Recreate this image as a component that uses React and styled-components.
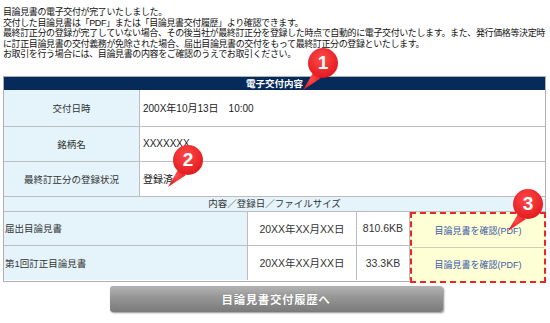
import React from 'react';
import styled, { createGlobalStyle } from 'styled-components';

const GlobalStyle = createGlobalStyle`
  html, body {
    margin: 0;
    padding: 0;
    background: #ffffff;
  }
  body {
    font-family: "Liberation Sans", "Noto Sans CJK JP", sans-serif;
    color: #222;
  }
`;

const introLines = [
  '目論見書の電子交付が完了いたしました。',
  '交付した目論見書は「PDF」または「目論見書交付履歴」より確認できます。',
  '最終訂正分の登録が完了していない場合、その後当社が最終訂正分を登録した時点で自動的に電子交付いたします。また、発行価格等決定時',
  'に訂正目論見書の交付義務が免除された場合、届出目論見書の交付をもって最終訂正分の登録といたします。',
  'お取引を行う場合には、目論見書の内容をご確認のうえでお取引ください。',
];

const infoRows = [
  { label: '交付日時', value: '200X年10月13日　10:00' },
  { label: '銘柄名', value: 'XXXXXXX' },
  { label: '最終訂正分の登録状況', value: '登録済' },
];

const docs = [
  { name: '届出目論見書', date: '20XX年XX月XX日', size: '810.6KB' },
  { name: '第1回訂正目論見書', date: '20XX年XX月XX日', size: '33.3KB' },
];

const Badge = ({ num, x, y }) => (
  <BadgeWrap style={{ left: x, top: y }}>
    <svg width="44" height="44" viewBox="0 0 44 44">
      <defs>
        <radialGradient id={`bg${num}`} cx="45%" cy="35%" r="70%">
          <stop offset="0%" stopColor="#ff4a4a" />
          <stop offset="100%" stopColor="#e0161c" />
        </radialGradient>
      </defs>
      <path d="M16 25 L6 42 L24 30 Z" fill={`url(#bg${num})`} />
      <circle cx="26" cy="15" r="15" fill={`url(#bg${num})`} />
    </svg>
    <BadgeNum>{num}</BadgeNum>
  </BadgeWrap>
);

export default function App() {
  return (
    <Page>
      <GlobalStyle />
      <Intro>
        {introLines.map((l) => (
          <IntroLine key={l}>{l}</IntroLine>
        ))}
      </Intro>

      <Panel>
        <PanelHead>電子交付内容</PanelHead>
        {infoRows.map((r) => (
          <InfoRow key={r.label}>
            <LabelCell>{r.label}</LabelCell>
            <ValueCell>{r.value}</ValueCell>
          </InfoRow>
        ))}
        <SubHead>内容／登録日／ファイルサイズ</SubHead>
        <DocArea>
          <DocGrid>
            {docs.map((d, i) => (
              <React.Fragment key={d.name}>
                <DocName $last={i === docs.length - 1}>{d.name}</DocName>
                <DocCell $last={i === docs.length - 1}>{d.date}</DocCell>
                <DocCell $last={i === docs.length - 1}>{d.size}</DocCell>
              </React.Fragment>
            ))}
          </DocGrid>
          <LinkColumn>
            {docs.map((d, i) => (
              <LinkCell key={d.name} $last={i === docs.length - 1}>
                目論見書を確認(PDF)
              </LinkCell>
            ))}
          </LinkColumn>
        </DocArea>
      </Panel>

      <ButtonRow>
        <HistoryButton>目論見書交付履歴へ</HistoryButton>
      </ButtonRow>

      <Badge num="1" x={297} y={48} />
      <Badge num="2" x={162} y={145} />
      <Badge num="3" x={502} y={189} />
    </Page>
  );
}

const Page = styled.div`
  position: relative;
  width: 550px;
  height: 323px;
  overflow: hidden;
  padding: 7px 4px 0 3px;
  box-sizing: border-box;
`;

const Intro = styled.div`
  display: flex;
  flex-direction: column;
`;

const IntroLine = styled.div`
  font-size: 9px;
  line-height: 10.6px;
  letter-spacing: -0.38px;
  white-space: nowrap;
  color: #111;
`;

const Panel = styled.div`
  margin-top: 16px;
  border: 1px solid #b0b0b0;
  display: flex;
  flex-direction: column;
`;

const PanelHead = styled.div`
  height: 13px;
  background: #062a5a;
  color: #fff;
  font-size: 9.5px;
  font-weight: bold;
  line-height: 13px;
  text-align: center;
`;

const InfoRow = styled.div`
  display: grid;
  grid-template-columns: 136px 1fr;
  height: 34px;
  border-top: 1px solid #bdbdbd;
  &:nth-of-type(2) {
    border-top: none;
    height: 36px;
  }
`;

const LabelCell = styled.div`
  background: #e4f4fa;
  border-right: 1px solid #bdbdbd;
  display: flex;
  align-items: center;
  justify-content: center;
  font-size: 9.5px;
  color: #333;
`;

const ValueCell = styled.div`
  display: flex;
  align-items: center;
  padding-left: 3px;
  font-size: 10px;
  color: #222;
`;

const SubHead = styled.div`
  height: 14px;
  border-top: 1px solid #bdbdbd;
  background: #e4f4fa;
  font-size: 9.5px;
  line-height: 14px;
  text-align: center;
  color: #333;
`;

const DocArea = styled.div`
  display: flex;
  border-top: 1px solid #bdbdbd;
`;

const DocGrid = styled.div`
  display: grid;
  grid-template-columns: 244px 109px 53px;
  grid-auto-rows: 34px;
`;

const DocName = styled.div`
  background: #e4f4fa;
  border-right: 1px solid #bdbdbd;
  border-bottom: ${({ $last }) => ($last ? 'none' : '1px solid #bdbdbd')};
  display: flex;
  align-items: center;
  padding-left: 1px;
  font-size: 9.5px;
  color: #333;
`;

const DocCell = styled.div`
  border-right: 1px solid #bdbdbd;
  border-bottom: ${({ $last }) => ($last ? 'none' : '1px solid #bdbdbd')};
  display: flex;
  align-items: center;
  justify-content: center;
  font-size: 10.5px;
  color: #333;
`;

const LinkColumn = styled.div`
  flex: 1;
  display: flex;
  flex-direction: column;
  border: 2px dashed #e8262b;
  margin: 0 -1px -2px 0;
  background: #ffffd6;
`;

const LinkCell = styled.div`
  height: 33px;
  border-bottom: ${({ $last }) => ($last ? 'none' : '1px solid #cfcfb0')};
  display: flex;
  align-items: center;
  justify-content: center;
  font-size: 9px;
  color: #3a5aa6;
`;

const ButtonRow = styled.div`
  display: flex;
  justify-content: center;
  margin-top: 4px;
  padding-left: 3px;
`;

const HistoryButton = styled.div`
  width: 333px;
  height: 26px;
  border-radius: 3px;
  background: linear-gradient(#b4b4b4 0%, #959595 45%, #7a7a7a 100%);
  box-shadow: 1px 1px 2px rgba(0, 0, 0, 0.45);
  color: #fff;
  font-size: 11.5px;
  font-weight: bold;
  letter-spacing: 0.6px;
  display: flex;
  align-items: center;
  justify-content: center;
  text-shadow: 0 0 1px rgba(0, 0, 0, 0.3);
`;

const BadgeWrap = styled.div`
  position: absolute;
  width: 44px;
  height: 44px;
`;

const BadgeNum = styled.span`
  position: absolute;
  left: 11px;
  top: 0;
  width: 30px;
  height: 30px;
  display: flex;
  align-items: center;
  justify-content: center;
  color: #fff;
  font-family: "Liberation Sans", Arial, sans-serif;
  font-weight: bold;
  font-size: 19px;
`;
